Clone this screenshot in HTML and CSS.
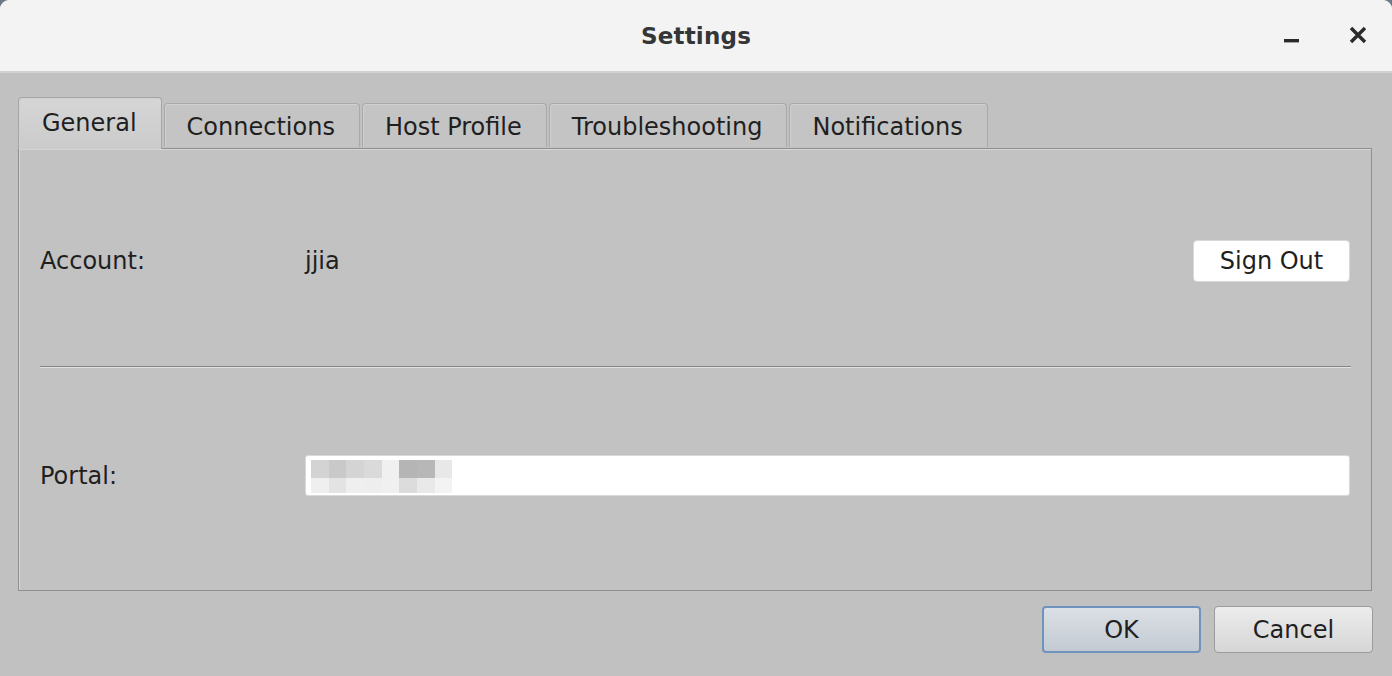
FILE: index.html
```html
<!DOCTYPE html>
<html>
<head>
<meta charset="utf-8">
<title>Settings</title>
<link rel="stylesheet" href="styles.css">
</head>
<body>
<div class="window">
  <header class="titlebar">
    <div class="title">Settings</div>
    <div class="controls">
      <button class="ctrl" aria-label="Minimize">
        <svg width="18" height="18" viewBox="0 0 18 18"><rect x="1" y="13" width="15" height="3.4" fill="#2a2a2a"/></svg>
      </button>
      <button class="ctrl" aria-label="Close">
        <svg width="20" height="20" viewBox="0 0 20 20"><path d="M3 3 L17 17 M17 3 L3 17" stroke="#2a2a2a" stroke-width="3.4" stroke-linecap="butt"/></svg>
      </button>
    </div>
  </header>
  <main class="content">
    <nav class="tabs">
      <div class="tab active">General</div>
      <div class="tab">Connections</div>
      <div class="tab">Host Profile</div>
      <div class="tab">Troubleshooting</div>
      <div class="tab">Notifications</div>
    </nav>
    <section class="panel">
      <div class="row account">
        <div class="label">Account:</div>
        <div class="value">jjia</div>
        <button class="btn-white">Sign Out</button>
      </div>
      <div class="separator"></div>
      <div class="row portal">
        <div class="label">Portal:</div>
        <div class="input">
          <div class="blur">
            <span class="b1"></span><span class="b2"></span><span class="b3"></span><span class="b4"></span><span class="b5"></span><span class="b6"></span><span class="b7"></span><span class="b8"></span>
            <span class="b9"></span><span class="b10"></span><span class="b11"></span><span class="b12"></span><span class="b13"></span><span class="b14"></span><span class="b15"></span><span class="b16"></span>
          </div>
        </div>
      </div>
    </section>
    <footer class="footer">
      <button class="btn ok">OK</button>
      <button class="btn">Cancel</button>
    </footer>
  </main>
</div>
</body>
</html>
```

FILE: styles.css
```css
html, body {
  margin: 0;
  padding: 0;
  background: #6b7886;
}
body {
  width: 1392px;
  height: 676px;
  overflow: hidden;
  font-family: "DejaVu Sans", "Liberation Sans", sans-serif;
  color: #1f1f1f;
}
.window {
  width: 1392px;
  height: 676px;
  display: flex;
  flex-direction: column;
  border-radius: 9px 9px 0 0;
  overflow: hidden;
  background: #c1c1c1;
}
.titlebar {
  height: 71px;
  flex: none;
  background: #f3f3f3;
  border-bottom: 2px solid #d2d2d2;
  position: relative;
  display: flex;
  align-items: center;
  justify-content: center;
}
.title {
  font-size: 23px;
  font-weight: bold;
  color: #333537;
  letter-spacing: 0.2px;
}
.controls {
  position: absolute;
  right: 23px;
  top: 24px;
  display: flex;
  gap: 44px;
  align-items: center;
}
.ctrl {
  border: none;
  background: transparent;
  padding: 0;
  width: 22px;
  height: 22px;
  display: flex;
  align-items: center;
  justify-content: center;
}
.content {
  flex: 1;
  display: flex;
  flex-direction: column;
  padding: 24px 20px 0 18px;
}
.tabs {
  display: flex;
  align-items: flex-end;
  gap: 2px;
  height: 51px;
  position: relative;
  z-index: 1;
}
.tab {
  height: 44px;
  padding: 2px 24px 0 22px;
  box-sizing: border-box;
  font-size: 24px;
  display: flex;
  align-items: center;
  background: #c4c4c4;
  border: 1px solid #a9a9a9;
  border-bottom: none;
  border-radius: 4px 4px 0 0;
  color: #1f1f1f;
  box-shadow: inset 1px 1px 0 #d0d0d0;
  margin-bottom: 1px;
}
.tab.active {
  margin-bottom: -1px;
  background: linear-gradient(#d6d6d6, #cbcbcb);
  border-color: #a6a6a6;
  padding: 0 24px 2px 23px;
  height: 52px;
}
.panel {
  height: 443px;
  box-sizing: border-box;
  border: 1px solid #8f8f8f;
  box-shadow: inset 1px 1px 0 #d6d6d6;
  background: #c2c2c2;
  display: flex;
  flex-direction: column;
  padding: 91px 21px 0 21px;
}
.row {
  display: flex;
  align-items: center;
  font-size: 24px;
}
.account {
  height: 42px;
}
.label {
  width: 265px;
  flex: none;
}
.value {
  flex: 1;
}
.btn-white {
  width: 157px;
  height: 42px;
  background: #ffffff;
  border: 1px solid #d8d8d8;
  border-radius: 4px;
  font-family: inherit;
  font-size: 24px;
  color: #1f1f1f;
  padding: 0;
}
.separator {
  margin-top: 84px;
  margin-right: -1px;
  height: 1px;
  background: #858585;
  border-bottom: 1px solid #e2e2e2;
}
.portal {
  margin-top: 87px;
  height: 41px;
}
.input {
  flex: 1;
  height: 41px;
  box-sizing: border-box;
  background: #ffffff;
  border-radius: 3px;
  border: 1px solid #d9d9d9;
  padding: 4px 0 0 5px;
}
.blur {
  display: grid;
  grid-template-columns: 18px 17px 18px 18px 17px 18px 18px 17px;
  grid-template-rows: 18px 15px;
  width: 141px;
}
.b1 { background: #d3d3d3; }
.b2 { background: #c9c9c9; }
.b3 { background: #d4d4d4; }
.b4 { background: #dadada; }
.b5 { background: #f0f0f0; }
.b6 { background: #b5b5b5; }
.b7 { background: #b7b7b7; }
.b8 { background: #e8e8e8; }
.b9 { background: #efefef; }
.b10 { background: #e3e3e3; }
.b11 { background: #efefef; }
.b12 { background: #eeeeee; }
.b13 { background: #f0f0f0; }
.b14 { background: #dcdcdc; }
.b15 { background: #e9e9e9; }
.b16 { background: #f3f3f3; }
.footer {
  display: flex;
  justify-content: flex-end;
  gap: 13px;
  padding-top: 15px;
  margin-right: -1px;
}
.btn {
  width: 159px;
  height: 47px;
  box-sizing: border-box;
  border: 1px solid #9c9c9c;
  border-radius: 4px;
  background: linear-gradient(#ececec, #d6d6d6);
  font-family: inherit;
  font-size: 24px;
  color: #1f1f1f;
  padding: 0;
}
.btn.ok {
  border: 2px solid #6f93bd;
  background: linear-gradient(#dbe0e6, #c4cad2);
}
```
